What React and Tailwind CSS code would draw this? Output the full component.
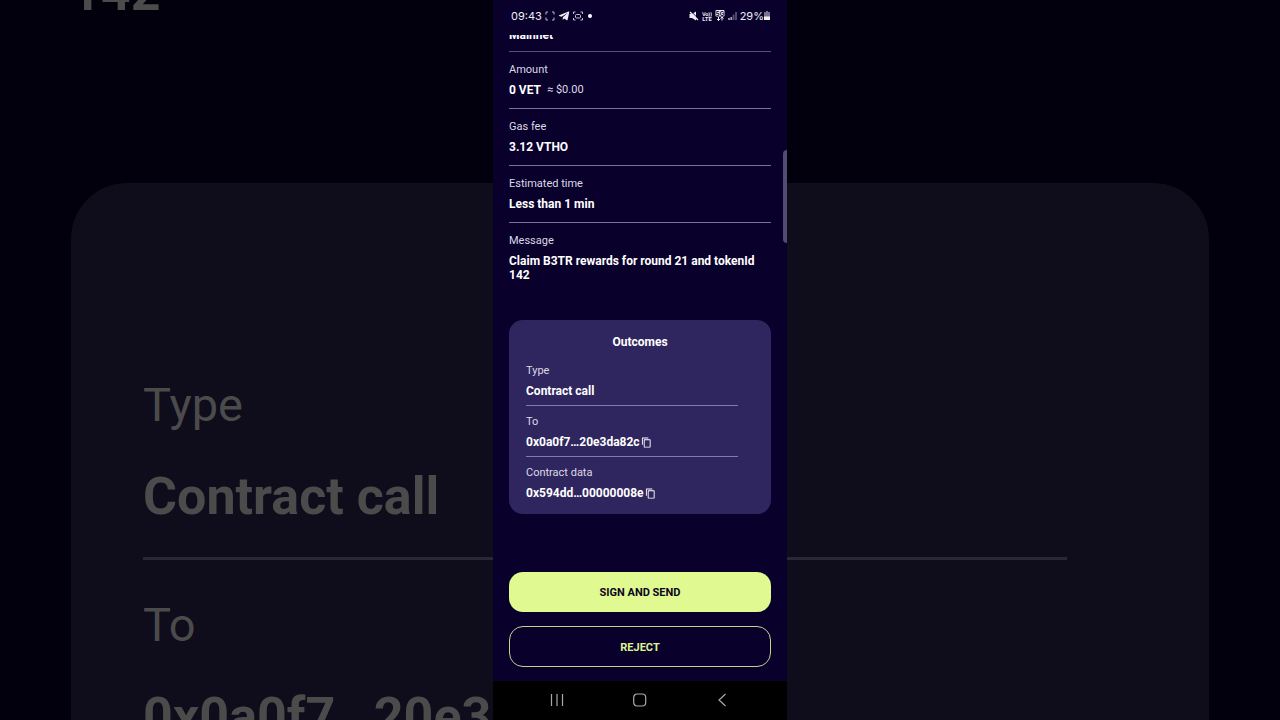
import React from "react";
import { MdContentCopy } from "react-icons/md";
import { FaTelegramPlane } from "react-icons/fa";

const details = [
  { label: "Amount", value: "0 VET", extra: "≈ $0.00" },
  { label: "Gas fee", value: "3.12 VTHO" },
  { label: "Estimated time", value: "Less than 1 min" },
  { label: "Message", value: "Claim B3TR rewards for round 21 and tokenId 142" },
];

const outcomes = [
  { label: "Type", value: "Contract call" },
  { label: "To", value: "0x0a0f7…20e3da82c", copy: true },
  { label: "Contract data", value: "0x594dd…00000008e", copy: true },
];

// Enlarged, dimmed copy of the screen that fills the window behind the phone
const Backdrop = () => (
  <div aria-hidden="true" className="absolute inset-0 overflow-hidden px-[71px] text-[#4b4b4b]">
    <div className="-mt-[37px] h-[60px] text-[52px] leading-[60px] font-bold">142</div>
    <div className="mt-[160px] h-[840px] rounded-[56px] bg-[#0f0c1b] pt-[190px] pr-[142px] pl-[72px]">
      <div className="text-[47px] leading-[64px]">Type</div>
      <div className="mt-[30px] text-[52px] leading-[60px] font-bold">Contract call</div>
      <div className="mt-[30px] h-[3px] bg-[#2b2735]" />
      <div className="mt-[33px] text-[47px] leading-[64px]">To</div>
      <div className="mt-[30px] text-[52px] leading-[60px] font-bold">0x0a0f7…20e3da82c</div>
    </div>
  </div>
);

const StatusBar = () => (
  <div className="flex h-[35px] items-center justify-between pr-[17px] pb-1 pl-[18px] font-['Inter',sans-serif] text-[11px] leading-4 text-[#eeeef4]">
    <div className="flex items-center gap-[3px]">
      <span>09:43</span>
      <svg viewBox="0 0 10 10" className="h-[10px] w-[10px]" fill="none" stroke="#b9b6cc">
        <path d="M1 3.500V1h2M7 1h2v2.500M9 6.500V9H7M3 9H1V6.500" />
      </svg>
      <FaTelegramPlane className="h-3 w-3" />
      <svg viewBox="0 0 10 10" className="h-[10px] w-[10px]" fill="none" stroke="#c5c2d6">
        <path d="M.5 3V1h2M7.500 1h2v2M9.500 7v2h-2M2.500 9h-2V7" />
        <rect x="2.500" y="3.500" width="5" height="3.500" rx="1" />
      </svg>
      <span className="ml-[2px] h-1 w-1 rounded-full bg-white" />
    </div>
    <div className="flex items-center gap-[3px]">
      <svg viewBox="0 0 10 10" className="h-[10px] w-[10px]">
        <path d="M.5 3h2.500L7 .5v9L3 7H.5z" fill="#eeeef4" />
        <path d="M1.800.2l8 8" stroke="#09002b" />
        <path d="M1 1l8 8" stroke="#eeeef4" strokeWidth="1.300" />
      </svg>
      <svg viewBox="0 0 20 20" className="h-[10px] w-[10px]" fill="#eeeef4">
        <text x="10" y="9" textAnchor="middle" fontSize="10" fontWeight="700" textRendering="geometricPrecision">Vo))</text>
        <text x="10" y="19" textAnchor="middle" fontSize="11" fontWeight="700" textRendering="geometricPrecision">LTE</text>
      </svg>
      <svg viewBox="0 0 10 11" className="h-[11px] w-[10px]">
        <rect x=".5" y="0" width="9" height="6.500" rx="1" fill="#eeeef4" />
        <text x="5" y="5.500" textAnchor="middle" fontSize="6" fontWeight="700" fill="#09002b">5G</text>
        <path d="M3.500 7v3.500M2 9l1.500 1.500L5 9M7 10.500V7M5.500 8.500L7 7l1.500 1.500" stroke="#eeeef4" fill="none" />
      </svg>
      <svg viewBox="0 0 9 10" className="h-[10px] w-[9px]">
        <path d="M1 7v2M3.300 6v3" stroke="#a5a2ba" strokeWidth="1.800" />
        <path d="M5.600 3.500v5.500M8 1v8" stroke="#554f74" strokeWidth="1.800" />
      </svg>
      <div className="flex items-center">
        <span>29%</span>
        <svg viewBox="0 0 6 9" className="h-[9px] w-[6px]">
          <path d="M2 0h2v1h1.200q.8 0 .8.800V9H0V1.800Q0 1 .8 1H2z" fill="#77728f" />
          <path d="M0 5.500h6V9H0z" fill="#eeeef4" />
        </svg>
      </div>
    </div>
  </div>
);

const NavBar = () => (
  <nav className="flex h-[39px] items-center justify-between bg-black px-[57px] pb-[2px] text-[#a9a9a9]">
    <button type="button" aria-label="Recent apps">
      <svg viewBox="0 0 14 14" className="h-[14px] w-[14px]" fill="none" stroke="currentColor" strokeWidth="1.200">
        <path d="M1.500 1v12M7 1v12M12.500 1v12" />
      </svg>
    </button>
    <button type="button" aria-label="Home">
      <svg viewBox="0 0 14 14" className="h-[14px] w-[14px]" fill="none" stroke="currentColor" strokeWidth="1.200">
        <rect x=".7" y="1" width="12" height="12" rx="3.500" />
      </svg>
    </button>
    <button type="button" aria-label="Back">
      <svg viewBox="0 0 14 14" className="h-[14px] w-[14px]" fill="none" stroke="currentColor" strokeWidth="1.200">
        <path d="M9.500 1L3 7l6.500 6" />
      </svg>
    </button>
  </nav>
);

const App = () => {
  return (
    <div className="relative flex min-h-screen justify-center overflow-hidden bg-[#03000e] font-['Roboto',sans-serif]">
      <Backdrop />

      <div className="relative flex w-[294px] flex-col bg-[#09002b] text-white">
        <StatusBar />

        <main className="flex flex-1 flex-col px-4">
          {/* Network row, partly scrolled under the status bar */}
          <div className="flex h-[17px] flex-col justify-end overflow-hidden border-b border-[#55507c] pb-[9px] text-xs leading-[14px] font-bold">
            Mainnet
          </div>

          <dl>
            {details.map((item) => (
              <div key={item.label} className="border-b border-[#77739a] pt-[10px] pb-[11px] last:border-b-0 last:pb-0">
                <dt className="text-[11px] leading-4 text-[#dcdae6]">{item.label}</dt>
                <dd className="mt-[5px] flex items-center gap-[6px] text-xs leading-[14px] font-bold">
                  <span>{item.value}</span>
                  {item.extra && <span className="text-[11px] leading-[14px] font-normal text-[#dcdae6]">{item.extra}</span>}
                </dd>
              </div>
            ))}
          </dl>

          <section className="mt-[38px] rounded-[14px] bg-[#30265f] pt-[14px] pb-[7px]">
            <h2 className="text-center text-xs leading-4 font-bold">Outcomes</h2>
            <dl className="mt-[5px] pr-[33px] pl-[17px]">
              {outcomes.map((item) => (
                <div key={item.label} className="border-b border-[#8479b5] pt-2 pb-[7px] last:border-b-0">
                  <dt className="text-[11px] leading-4 text-[#dcdae6]">{item.label}</dt>
                  <dd className="mt-[5px] flex items-center gap-px text-xs leading-[14px] font-bold">
                    {item.value}
                    {item.copy && (
                      <button type="button" aria-label={`Copy ${item.label}`}>
                        <MdContentCopy className="h-[11px] w-[11px]" />
                      </button>
                    )}
                  </dd>
                </div>
              ))}
            </dl>
          </section>

          <div className="mt-auto flex flex-col gap-[14px] pt-8 pb-[14px] text-[11px] leading-4 font-bold">
            <button type="button" className="h-10 rounded-[14px] bg-[#e0f990] pt-[2px] text-[#0b0620]">
              SIGN AND SEND
            </button>
            <button type="button" className="h-[41px] rounded-[14px] border border-[#c3d58c] pt-[2px] text-[#dcf58e]">
              REJECT
            </button>
          </div>
        </main>

        <NavBar />

        {/* Scroll indicator */}
        <div className="absolute top-[150px] right-0 h-[93px] w-1 rounded-l bg-[#524d70]" />
      </div>
    </div>
  );
};

export default App;
